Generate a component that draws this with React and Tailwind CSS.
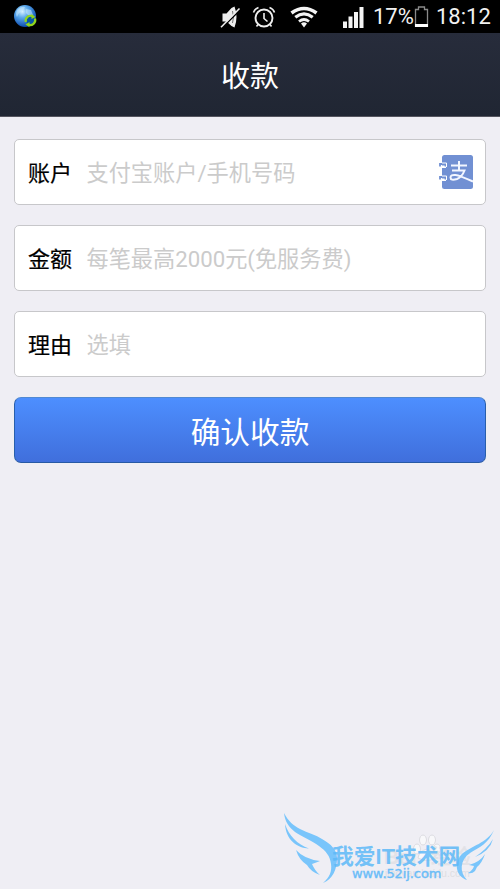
import React from "react";

function StatusBar() {
  return (
    <div className="flex h-[33px] items-center bg-black text-[#f2f2f2]">
      <svg className="ml-3 h-[26px] w-[26px] shrink-0" viewBox="0 0 26 26">
        <defs>
          <radialGradient id="globe" cx="0.38" cy="0.3" r="0.7">
            <stop offset="0" stopColor="#d8f1ff" />
            <stop offset="0.4" stopColor="#5ba9ec" />
            <stop offset="1" stopColor="#0b4bae" />
          </radialGradient>
        </defs>
        <circle cx="13" cy="12" r="11" fill="url(#globe)" />
        <path d="M5 6q4-4 8-3l-2 4-4 2-2 4q-2-3 0-7zM14 5l5 1 2 5-4 1-3-3z" fill="#c9eaff" opacity=".55" />
        <circle cx="18.500" cy="16.500" r="4" fill="#0756a8" />
        <path d="M13.800 18a5 5 0 0 1 7-5.700M23 14.500a5 5 0 0 1-7 6" fill="none" stroke="#91d51c" strokeWidth="2.200" />
        <path d="M19.500 10l4 3-4 2zM17.500 18l-4 2.500 4 2.700z" fill="#91d51c" />
      </svg>
      <svg className="ml-[182px] h-[24px] w-[22px] shrink-0" viewBox="0 0 22 24">
        <path d="M2.500 8.500h4l5-5.500 3-1.500q4 10.500 0 21l-3-1.500-5-4.500h-4z" fill="#eee" />
        <path d="M12.500 6q2 6 0 12" fill="none" stroke="#555" strokeWidth=".8" />
        <path d="M2 23L20.500 4.500" stroke="#000" strokeWidth="1.600" />
        <path d="M1 22.200L19.500 3.500" stroke="#eee" strokeWidth="1.600" />
      </svg>
      <svg className="ml-[10px] h-[24px] w-[24px] shrink-0" viewBox="0 0 24 24" fill="none" stroke="#eee">
        <circle cx="12" cy="13" r="8.500" strokeWidth="1.900" />
        <path d="M12 8v5.500l3.500 3M1.500 7.500q1-3.500 5-5M22.500 7.500q-1-3.500-5-5M6 19.500l-1.500 2M18 19.500l1.500 2" strokeWidth="1.600" />
      </svg>
      <svg className="ml-[14px] h-[24px] w-[28px] shrink-0" viewBox="0 0 28 24" fill="none" stroke="#f4f4f4">
        <path d="M1.500 8Q14-1 26.500 8" strokeWidth="3.600" />
        <path d="M5.300 12.300Q14 5.600 22.700 12.300" strokeWidth="3.200" />
        <path d="M9 16.500Q14 12.600 19 16.500" strokeWidth="2.800" />
        <path d="M11 18.500Q14 16 17 18.500L14 22.500z" fill="#f4f4f4" stroke="none" />
      </svg>
      <svg className="ml-[24px] h-[22px] w-[22px] shrink-0" viewBox="0 0 22 22" fill="#f4f4f4">
        <path d="M1 15.500h4V22H1zM6.500 10.500h4V22h-4zM12 6h4v16h-4zM17.500 1h4v21h-4z" />
      </svg>
      <span className="ml-[9px] w-[41px] shrink-0 whitespace-nowrap pt-px font-['Roboto','Liberation_Sans',sans-serif] text-[22px] leading-[34px]">17%</span>
      <svg className="h-[24px] w-[16px] shrink-0" viewBox="0 0 16 24">
        <path d="M1.500 21V4.500h3V2h6v2.500h3V21z" fill="none" stroke="#8a8a8a" strokeWidth="1.300" />
        <path d="M1 19h13v3H1z" fill="#fff" />
      </svg>
      <span className="ml-[6px] whitespace-nowrap pt-px font-['Roboto','Liberation_Sans',sans-serif] text-[22px] leading-[34px]">18:12</span>
    </div>
  );
}

function ContactIcon() {
  return (
    <svg className="h-[34px] w-[36px] shrink-0" viewBox="0 0 36 34">
      <rect x="3" y="0" width="31" height="34" rx="2.500" fill="#7190d3" />
      <path d="M2 10.500h5v2.500H2zM2 23.500h5V26H2z" fill="#fff" />
      <path d="M1 11.500V9h5.500v2.500M1 24.500V22h5.500v2.500" fill="none" stroke="#7190d3" strokeWidth="1.800" />
      <path d="M3 8h4.500v4M3 21h4.500v4" fill="none" stroke="#fff" strokeWidth="1" />
      <path d="M12 10.500h16M20 6v9.500M13 15.500h12.500Q23 22 18 24q-6.500 2-6.500-1.500 0-3 5-2.500 4 .5 17.500 6.500" fill="none" stroke="#f2f6ff" strokeWidth="2" />
    </svg>
  );
}

function Field({ label, hint, children }) {
  return (
    <div className="flex h-[66px] items-center rounded-[5px] border border-[#c7c7ca] bg-white pl-[13px] pr-[10px] text-[22px] leading-[33px]">
      <span className="w-[58.500px] shrink-0 pt-[2px] text-black [-webkit-text-stroke:0.2px_black]">{label}</span>
      <span className="flex-1 whitespace-nowrap pt-[2px] text-[22.200px] text-[#cbcbcb]">{hint}</span>
      {children}
    </div>
  );
}

function Watermark() {
  return (
    <div className="absolute bottom-0 left-[280px] h-[79px] w-[220px] overflow-hidden">
      <svg className="absolute inset-0 h-full w-full" viewBox="0 0 220 79">
        <g fill="#f8f8fa" stroke="#dcdce1" strokeWidth="1">
          <ellipse cx="137" cy="39" rx="3.500" ry="5" />
          <ellipse cx="143" cy="30" rx="3.500" ry="5" />
          <ellipse cx="152" cy="30" rx="3.500" ry="5" />
          <ellipse cx="157" cy="39" rx="3.500" ry="5" />
          <path d="M147 39q7 3 8 9-8 5-17 0 1-7 9-9z" />
        </g>
      </svg>
      <span className="absolute left-[104px] top-[34px] whitespace-nowrap font-['Liberation_Sans','Noto_Sans_CJK_SC',sans-serif] text-[21px] font-bold leading-[26px] text-[#e2e2e7]">Bai<span className="ml-[14px] text-[20px]">经验</span></span>
      <span className="absolute left-[105px] top-[56px] whitespace-nowrap font-['Liberation_Sans',sans-serif] text-[10.500px] leading-[14px] text-[#dedee3]">jingyan.baidu.com</span>
      <svg className="absolute inset-0 h-full w-full" viewBox="0 0 220 79" fill="#79c5fb">
        <path d="M4 3C8 11 14 16 20 19C28 23 36 25 42 29C51 34 57 40 57 48C57 59 53 69 43 73C50 67 52 61 51 54C50 46 46 41 39 36C33 31 22 27 15 22C9 17 5 12 4 3z" />
        <path d="M5 14C9 26 17 34 29 38.500C17 38 6 30 5 14z" />
        <path d="M16 40Q24 49 40 51Q35 53 32 54Q35 61 40 65Q31 62 27 55Q19 50 16 40z" />
        <path d="M214 20C208 34 200 37 190 43C180 50 179 62 187 70C175 66 174 52 182 44C191 36 207 33 214 20z" />
        <path d="M213 29Q210 41 195 47Q207 39 213 29zM205 44Q202 53 197 57L195 61Q192 64 188 63Q193 60 194 56L189 55Q200 52 205 44z" />
      </svg>
      <span className="absolute left-[52px] top-[33px] whitespace-nowrap font-['Liberation_Sans','Noto_Sans_CJK_SC',sans-serif] text-[21.800px] font-bold leading-[28px] text-[#5db9f8]/85">我爱IT技术网</span>
      <span className="absolute left-[72px] top-[56px] whitespace-nowrap font-['DejaVu_Sans',sans-serif] text-[13px] leading-[16px] tracking-[-0.1px] text-[#6bbdf8] [-webkit-text-stroke:0.4px_#6bbdf8]">www.52ij.com</span>
    </div>
  );
}

export default function App() {
  return (
    <div className="relative flex h-[889px] w-[500px] flex-col overflow-hidden bg-[#efeef4] font-['Roboto','Noto_Sans_CJK_SC',sans-serif]">
      <StatusBar />
      <header className="flex h-[84px] items-center justify-center border-b border-[#55555f] bg-linear-to-b from-[#272c3b] to-[#202633] pt-[4px] text-[29px] leading-[44px] text-white">
        收款
      </header>
      <main className="flex flex-col gap-5 px-[14px] pt-[22px]">
        <Field label="账户" hint="支付宝账户/手机号码">
          <ContactIcon />
        </Field>
        <Field label="金额" hint="每笔最高2000元(免服务费)" />
        <Field label="理由" hint="选填" />
        <button className="h-[66px] rounded-[7px] border border-t-[#5189d3] border-r-[#285fac] border-b-[#2859a4] border-l-[#285fac] bg-linear-to-b from-[#4d8fff] to-[#406fdc] pt-[5px] text-[29.700px] leading-[44px] text-white">
          确认收款
        </button>
      </main>
      <Watermark />
    </div>
  );
}
